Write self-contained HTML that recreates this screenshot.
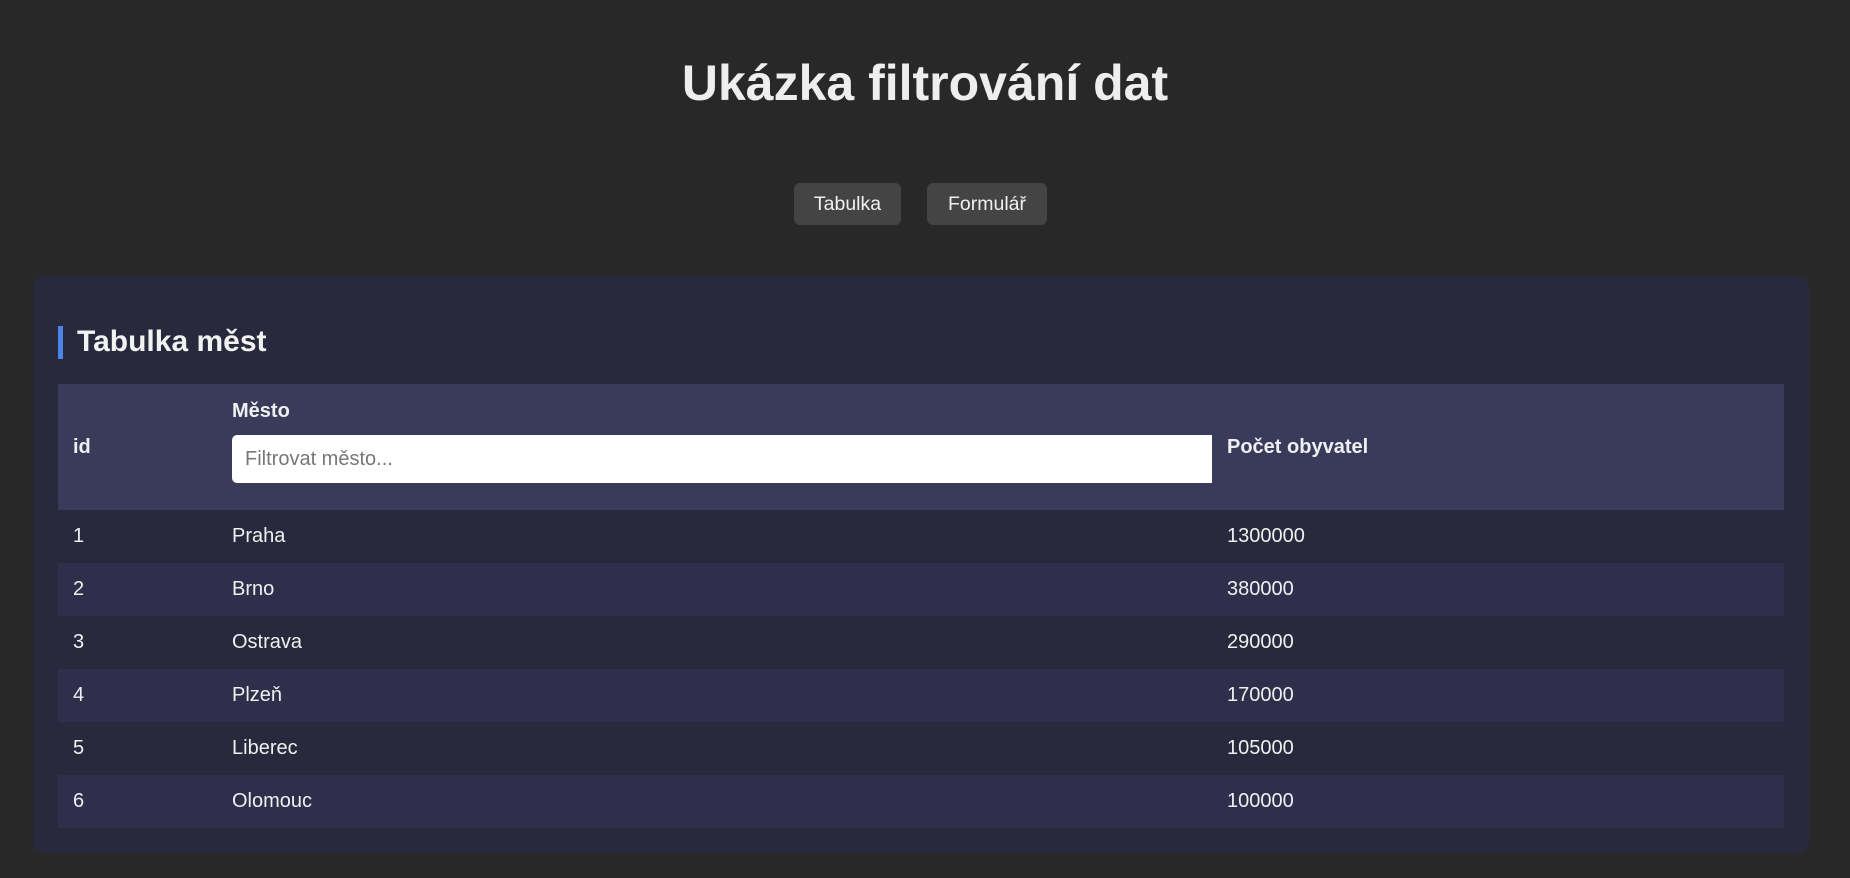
<!DOCTYPE html>
<html><head><meta charset="utf-8"><style>
*{box-sizing:border-box}
body{margin:0;background:#282828;width:1850px;height:878px;overflow:hidden;font-family:"Liberation Sans",Arial,sans-serif;color:#f0f0f0}
h1{position:absolute;left:0;width:1850px;top:53px;margin:0;text-align:center;font-size:50px;line-height:60px;font-weight:bold;color:#eee}
.btn{position:absolute;top:183px;height:42px;background:#444;border-radius:6px;color:#f0f0f0;font-size:19.5px;line-height:42px;text-align:center}
.card{position:absolute;left:33px;top:276px;width:1776px;height:577px;background:#29293d;border-radius:12px}
.bar{position:absolute;left:25px;top:50px;width:5px;height:33px;background:#4a86e8}
h2{position:absolute;left:44px;top:46px;margin:0;font-size:30px;line-height:40px;font-weight:bold;color:#f2f2f2}
.thead{position:absolute;left:25px;top:108px;width:1726px;height:126px;background:#3a3a5a}
.row{position:absolute;left:25px;width:1726px;height:53px;font-size:20px;line-height:53px}
.c1{position:absolute;left:15px}.c2{position:absolute;left:174px}.c3{position:absolute;left:1169px}
.b{font-weight:bold;font-size:20px}
.inp{position:absolute;left:174px;top:51px;width:980px;height:48px;background:#fff;border-radius:5px 0 0 5px;color:#777;font-size:20px;line-height:48px;padding-left:13px}
</style></head><body>
<h1>Ukázka filtrování dat</h1>
<div class="btn" style="left:794px;width:107px">Tabulka</div>
<div class="btn" style="left:927px;width:120px">Formulář</div>
<div class="card">
<div class="bar"></div>
<h2>Tabulka měst</h2>
<div class="thead">
<div class="b" style="position:absolute;left:15px;top:52px">id</div>
<div class="b" style="position:absolute;left:174px;top:16px">Město</div>
<div class="inp">Filtrovat město...</div>
<div class="b" style="position:absolute;left:1169px;top:52px">Počet obyvatel</div>
</div>
<div class="row" style="top:234px;background:#29293d"><span class="c1">1</span><span class="c2">Praha</span><span class="c3">1300000</span></div>
<div class="row" style="top:287px;background:#2f2e4b"><span class="c1">2</span><span class="c2">Brno</span><span class="c3">380000</span></div>
<div class="row" style="top:340px;background:#29293d"><span class="c1">3</span><span class="c2">Ostrava</span><span class="c3">290000</span></div>
<div class="row" style="top:393px;background:#2f2e4b"><span class="c1">4</span><span class="c2">Plzeň</span><span class="c3">170000</span></div>
<div class="row" style="top:446px;background:#29293d"><span class="c1">5</span><span class="c2">Liberec</span><span class="c3">105000</span></div>
<div class="row" style="top:499px;background:#2f2e4b"><span class="c1">6</span><span class="c2">Olomouc</span><span class="c3">100000</span></div>
</div>
</body></html>
